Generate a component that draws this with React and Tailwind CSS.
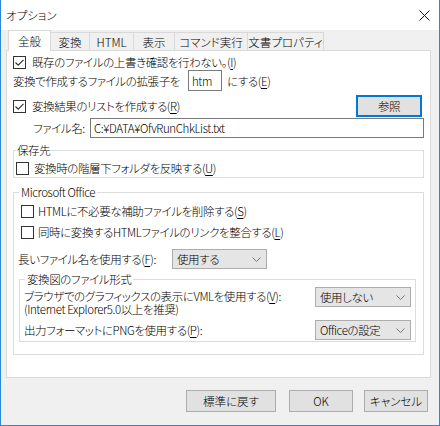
import React from 'react';

// Windows 10 style option dialog

function Check({ checked }) {
  return (
    <span className="w-[13px] h-[13px] border border-[#333333] bg-white flex items-center justify-center shrink-0">
      {checked && (
        <svg width="11" height="11" viewBox="0 0 11 11">
          <path d="M1.5 5.5L4.2 8.2L9.5 2.8" fill="none" stroke="#333333" strokeWidth="1.2" />
        </svg>
      )}
    </span>
  );
}

function Acc({ k }) {
  return (
    <span>
      (<span className="underline underline-offset-2">{k}</span>)
    </span>
  );
}

function Combo({ label, w }) {
  return (
    <div
      className={`${w} h-[20px] bg-[#e5e5e5] border border-[#acacac] flex items-center justify-between pl-[4px] pr-[5px] shrink-0`}
    >
      <span>{label}</span>
      <svg width="9" height="5" viewBox="0 0 9 5">
        <path d="M0.5 0.5L4.5 4.5L8.5 0.5" fill="none" stroke="#777777" strokeWidth="1" />
      </svg>
    </div>
  );
}

function Btn({ children, w, focused }) {
  return (
    <div
      className={`${w} h-[22px] flex items-center justify-center bg-[#e1e1e1] ${
        focused ? 'border-2 border-[#0078d7]' : 'border border-[#adadad]'
      }`}
    >
      {children}
    </div>
  );
}

const TABS = [
  { label: '変換', w: 'w-[39px]' },
  { label: 'HTML', w: 'w-[44px]' },
  { label: '表示', w: 'w-[41px]' },
  { label: 'コマンド実行', w: 'w-[73px]' },
  { label: '文書プロパティ', w: 'w-[76px]' },
];

export default function App() {
  return (
    <div className="w-[440px] h-[426px] flex flex-col bg-[#f0f0f0] border-x border-b border-[#2b88d8] text-[11.5px] leading-[16px] text-black font-light whitespace-nowrap font-['Noto_Sans_CJK_JP',sans-serif] [font-feature-settings:'palt']">
      {/* Title bar */}
      <div className="h-[30px] bg-white flex items-center justify-between pl-[5px] pr-[9px] shrink-0">
        <span>オプション</span>
        <svg width="11" height="11" viewBox="0 0 11 11">
          <path d="M0.5 0.5L10.5 10.5M10.5 0.5L0.5 10.5" stroke="#111111" strokeWidth="1" />
        </svg>
      </div>

      {/* Tabs */}
      <div className="flex items-end h-[20px] pl-[7px] shrink-0">
        <div className="relative z-10 w-[43px] h-[21px] -mb-px bg-white border border-b-0 border-[#d9d9d9] flex items-center justify-center pb-[1px]">
          全般
        </div>
        {TABS.map((t) => (
          <div
            key={t.label}
            className={`${t.w} h-[18px] border-t border-r border-[#d9d9d9] flex items-center justify-center`}
          >
            {t.label}
          </div>
        ))}
      </div>

      {/* Panel */}
      <div className="ml-[5px] w-[425px] h-[328px] bg-white border border-[#d9d9d9] flex flex-col shrink-0 tracking-[-0.4px]">
        <div className="mt-[3px] h-[16px] pl-[6px] flex items-center gap-[6px]">
          <Check checked />
          <span>
            既存のファイルの上書き確認を行わない。<Acc k="I" />
          </span>
        </div>

        <div className="h-[21px] pl-[6px] flex items-center">
          <span className="w-[175px]">変換で作成するファイルの拡張子を</span>
          <div className="w-[34px] h-[21px] border border-[#7a7a7a] flex items-center px-[3px]">htm</div>
          <span className="ml-[5px]">
            にする<Acc k="E" />
          </span>
        </div>

        <div className="mt-[5px] h-[20px] pl-[6px] pr-[8px] flex items-center justify-between">
          <div className="flex items-center gap-[6px]">
            <Check checked />
            <span>
              変換結果のリストを作成する<Acc k="R" />
            </span>
          </div>
          <Btn w="w-[66px]" focused>
            参照
          </Btn>
        </div>

        <div className="mt-[2px] h-[20px] pl-[26px] flex items-center">
          <span className="w-[57px]">ファイル名:</span>
          <div className="w-[334px] h-[20px] border border-[#7a7a7a] flex items-center px-[3px]">
            C:¥DATA¥OfvRunChkList.txt
          </div>
        </div>

        {/* 保存先 */}
        <fieldset className="mt-[4px] ml-[6px] w-[411px] border border-[#dcdcdc] pb-[1px]">
          <legend className="ml-[2px] px-[1px] leading-[16px]">保存先</legend>
          <div className="mt-[2px] h-[16px] pl-[2px] flex items-center gap-[5px]">
            <Check />
            <span>
              変換時の階層下フォルダを反映する<Acc k="U" />
            </span>
          </div>
        </fieldset>

        {/* Microsoft Office */}
        <fieldset className="mt-[6px] ml-[6px] w-[411px] border border-[#dcdcdc] pb-[12px]">
          <legend className="ml-[5px] px-[2px] leading-[16px]">Microsoft Office</legend>
          <div className="mt-[3px] h-[16px] pl-[7px] flex items-center gap-[4px]">
            <Check />
            <span>
              HTMLに不必要な補助ファイルを削除する<Acc k="S" />
            </span>
          </div>
          <div className="mt-[5px] h-[16px] pl-[7px] flex items-center gap-[4px]">
            <Check />
            <span>
              同時に変換するHTMLファイルのリンクを整合する<Acc k="L" />
            </span>
          </div>
          <div className="mt-[9px] h-[20px] pl-[4px] flex items-center">
            <span className="w-[154px]">
              長いファイル名を使用する<Acc k="F" />:
            </span>
            <Combo label="使用する" w="w-[95px]" />
          </div>

          <fieldset className="mt-[2px] ml-[5px] mr-[7px] border border-[#dcdcdc] pb-[1px]">
            <legend className="ml-[5px] px-[2px] leading-[16px]">変換図のファイル形式</legend>
            <div className="flex items-start justify-between pl-[4px] pr-[4px]">
              <div className="mt-[3px] leading-[13px]">
                <div>
                  ブラウザでのグラフィックスの表示にVMLを使用する<Acc k="V" />:
                </div>
                <div>(Internet Explorer5.0以上を推奨)</div>
              </div>
              <Combo label="使用しない" w="w-[96px]" />
            </div>
            <div className="mt-[4px] flex items-center justify-between pl-[4px] pr-[4px]">
              <span>
                出力フォーマットにPNGを使用する<Acc k="P" />:
              </span>
              <Combo label="Officeの設定" w="w-[96px]" />
            </div>
          </fieldset>
        </fieldset>
      </div>

      {/* Buttons */}
      <div className="mt-[12px] ml-[185px] flex items-center gap-[11px]">
        <Btn w="w-[90px] mr-[2px]">標準に戻す</Btn>
        <Btn w="w-[64px]">OK</Btn>
        <Btn w="w-[64px]">キャンセル</Btn>
      </div>
    </div>
  );
}
